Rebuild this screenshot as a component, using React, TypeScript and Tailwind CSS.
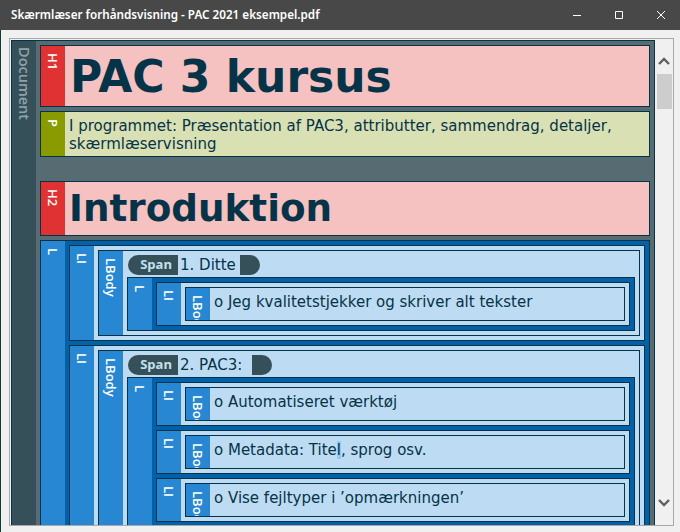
import React from "react";

const labelFont = { fontFamily: '"Open Sans", sans-serif' };

const Tag = ({ label, color }: { label: string; color: string }) => (
  <div className={`w-6 shrink-0 overflow-hidden [contain:size] ${color}`}>
    <div
      className="[writing-mode:vertical-rl] pt-[7px] pl-[3px] text-[13px] font-semibold leading-[18px] whitespace-nowrap text-white"
      style={labelFont}
    >
      {label}
    </div>
  </div>
);

const Box = ({
  label,
  tag,
  bg,
  children,
}: {
  label: string;
  tag: string;
  bg: string;
  children: React.ReactNode;
}) => (
  <div className={`flex border border-[#053347] ${bg}`}>
    <Tag label={label} color={tag} />
    <div className="min-w-0 flex-1">{children}</div>
  </div>
);

const Item = ({ children }: { children: React.ReactNode }) => (
  <Box label="LI" tag="bg-[#2887d3]" bg="bg-[#bddcf3]">
    <div className="p-1">
      <Box label="LBody" tag="bg-[#2887d3]" bg="bg-[#bddcf3]">
        {children}
      </Box>
    </div>
  </Box>
);

const SubItem = ({ children }: { children: React.ReactNode }) => (
  <Item>
    <div className="h-8 pl-1 pt-[5px] text-[15px] leading-[18px] text-[#053347]">{children}</div>
  </Item>
);

const SpanRow = ({ text, end }: { text: string; end: string }) => (
  <div className="mb-[2px] ml-px flex h-5 items-center text-[15px] text-[#053347]">
    <span
      className="flex h-5 w-[50px] items-center justify-end rounded-l-[10px] bg-[#365059] pr-[6px] text-[13px] font-bold text-[#c4e0ec]"
      style={labelFont}
    >
      Span
    </span>
    <span className="ml-[2px] whitespace-pre">{text}</span>
    <span className={`h-5 rounded-r-[10px] bg-[#365059] ${end}`} />
  </div>
);

const SubList = ({ children }: { children: React.ReactNode }) => (
  <Box label="L" tag="bg-[#2887d3]" bg="bg-[#0060a8]">
    <div className="flex flex-col gap-1 p-1">{children}</div>
  </Box>
);

export default function App() {
  return (
    <div
      className="flex h-[532px] w-[680px] flex-col overflow-hidden bg-[#0f3d33] text-[#053347]"
      style={{ fontFamily: '"DejaVu Sans", sans-serif' }}
    >
      <div className="flex h-[30px] shrink-0 items-center justify-between bg-[#484848] pl-[11px] pr-[14px] text-white">
        <span className="text-[11.7px] font-semibold" style={{ fontFamily: '"Noto Sans", sans-serif' }}>
          Skærmlæser forhåndsvisning - PAC 2021 eksempel.pdf
        </span>
        <div className="flex items-center gap-[32px]">
          <svg width="10" height="10" viewBox="0 0 10 10" fill="none" stroke="white">
            <path d="M1 5.5h8" />
          </svg>
          <svg width="10" height="10" viewBox="0 0 10 10" fill="none" stroke="white">
            <path d="M1.5 1.5h7v7h-7z" />
          </svg>
          <svg width="10" height="10" viewBox="0 0 10 10" fill="none" stroke="white">
            <path d="M1 1l8 8M9 1l-8 8" />
          </svg>
        </div>
      </div>

      <div className="ml-px min-h-0 flex-1 bg-[#f0f0f0] pb-[6px] pl-2 pr-[6px] pt-2">
        <div className="flex h-full border border-[#a8a8a8] pl-px pt-px">
          <div className="min-w-0 flex-1 overflow-hidden border-x border-t border-[#053347]">
            <div className="flex min-h-full bg-[#566b72]">
              <div className="w-6 shrink-0 bg-[#365059] [contain:size]">
                <div
                  className="[writing-mode:vertical-rl] pl-[3px] pt-[6px] text-[14.5px] font-semibold leading-[18px] text-[#8fa3aa]"
                  style={labelFont}
                >
                  Document
                </div>
              </div>
              <div className="flex min-w-0 flex-1 flex-col gap-1 p-1">
                <Box label="H1" tag="bg-[#e03232]" bg="bg-[#f5c1c1]">
                  <div className="flex h-[60px] items-center pl-[5px] pt-px text-[44px] font-bold leading-none">
                    PAC 3 kursus
                  </div>
                </Box>
                <Box label="P" tag="bg-[#8a9b00]" bg="bg-[#d9e0b3]">
                  <div className="h-11 pl-1 pt-[5px] text-[15px] leading-[18px]">
                    I programmet: Præsentation af PAC3, attributter, sammendrag, detaljer, skærmlæservisning
                  </div>
                </Box>
                <div className="mt-5">
                  <Box label="H2" tag="bg-[#e03232]" bg="bg-[#f5c1c1]">
                    <div className="flex h-[53px] items-center pl-1 pt-px text-[37.3px] font-bold leading-none">
                      Introduktion
                    </div>
                  </Box>
                </div>
                <Box label="L" tag="bg-[#2887d3]" bg="bg-[#0060a8]">
                  <div className="flex flex-col gap-1 p-1">
                    <Item>
                      <div className="p-1">
                        <SpanRow text="1. Ditte" end="ml-[4px] w-5" />
                        <SubList>
                          <SubItem>o Jeg kvalitetstjekker og skriver alt tekster</SubItem>
                        </SubList>
                      </div>
                    </Item>
                    <Item>
                      <div className="p-1">
                        <SpanRow text="2. PAC3:" end="ml-[10px] w-5" />
                        <SubList>
                          <SubItem>o Automatiseret værktøj</SubItem>
                          <SubItem>
                            o Metadata: Tite<span className="bg-[#8ccbf7]">l</span>, sprog osv.
                          </SubItem>
                          <SubItem>o Vise fejltyper i ’opmærkningen’</SubItem>
                        </SubList>
                      </div>
                    </Item>
                  </div>
                </Box>
              </div>
            </div>
          </div>

          <div className="flex w-[18px] shrink-0 flex-col items-center pt-[16px]">
            <svg width="14" height="10" viewBox="0 0 14 10" fill="none" stroke="#606060" strokeWidth="2.4">
              <path d="M2 8l5-5 5 5" />
            </svg>
            <div className="mt-[8px] h-[35px] w-[15px] bg-[#cdcdcd]" />
            <div className="flex-1" />
            <svg className="mb-[17px]" width="14" height="10" viewBox="0 0 14 10" fill="none" stroke="#606060" strokeWidth="2.4">
              <path d="M2 2l5 5 5-5" />
            </svg>
          </div>
        </div>
      </div>
    </div>
  );
}
